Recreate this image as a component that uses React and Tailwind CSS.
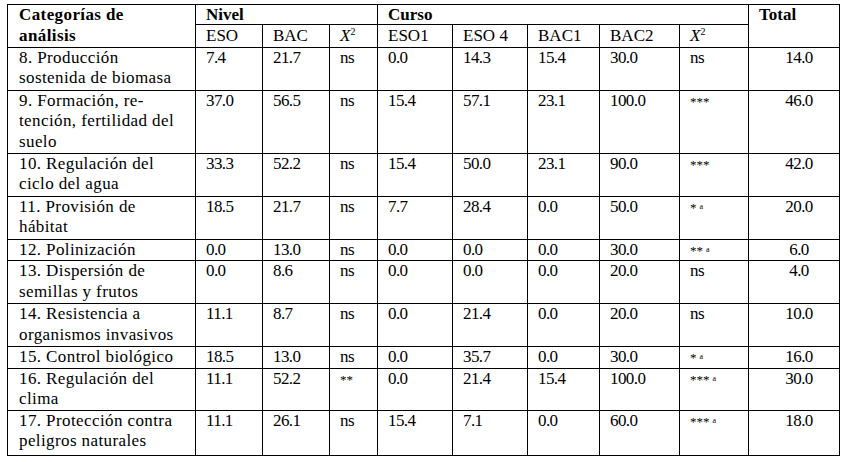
import React from "react";

const rows = [
  { h: "h-[43px]", label: ["8. Producción", "sostenida de biomasa"], v: ["7.4", "21.7", "ns", "0.0", "14.3", "15.4", "30.0", "ns"], total: "14.0" },
  { h: "h-[63px]", label: ["9. Formación, re-", "tención, fertilidad del", "suelo"], v: ["37.0", "56.5", "ns", "15.4", "57.1", "23.1", "100.0", "***"], total: "46.0" },
  { h: "h-[43px]", label: ["10. Regulación del", "ciclo del agua"], v: ["33.3", "52.2", "ns", "15.4", "50.0", "23.1", "90.0", "***"], total: "42.0" },
  { h: "h-[43px]", label: ["11. Provisión de", "hábitat"], v: ["18.5", "21.7", "ns", "7.7", "28.4", "0.0", "50.0", "* a"], total: "20.0" },
  { h: "h-[21px]", label: ["12. Polinización"], v: ["0.0", "13.0", "ns", "0.0", "0.0", "0.0", "30.0", "** a"], total: "6.0" },
  { h: "h-[43px]", label: ["13. Dispersión de", "semillas y frutos"], v: ["0.0", "8.6", "ns", "0.0", "0.0", "0.0", "20.0", "ns"], total: "4.0" },
  { h: "h-[43px]", label: ["14. Resistencia a", "organismos invasivos"], v: ["11.1", "8.7", "ns", "0.0", "21.4", "0.0", "20.0", "ns"], total: "10.0" },
  { h: "h-[21px]", label: ["15. Control biológico"], v: ["18.5", "13.0", "ns", "0.0", "35.7", "0.0", "30.0", "* a"], total: "16.0" },
  { h: "h-[41px]", label: ["16. Regulación del", "clima"], v: ["11.1", "52.2", "**", "0.0", "21.4", "15.4", "100.0", "*** a"], total: "30.0" },
  { h: "h-[45px]", label: ["17. Protección contra", "peligros naturales"], v: ["11.1", "26.1", "ns", "15.4", "7.1", "0.0", "60.0", "*** a"], total: "18.0" },
];

const cell = "border border-black align-top pl-[10px] leading-[20.5px]";

function Value({ text }) {
  if (text.startsWith("*")) {
    const [stars, sup] = text.split(" ");
    return (
      <span>
        <span className="text-[13px] leading-none">{stars}</span>
        {sup && <span className="ml-[3px] text-[8px] leading-none align-[3px]">{sup}</span>}
      </span>
    );
  }
  return <span className="tracking-[-0.6px]">{text}</span>;
}

function Chi() {
  return (
    <span className="font-normal">
      <span className="italic">X</span>
      <span className="text-[10px] leading-none align-[6px]">2</span>
    </span>
  );
}

export default function App() {
  return (
    <div className="min-h-[462px] w-[847px] bg-white pl-[7px] pt-[4px] text-black font-['Liberation_Serif','Times_New_Roman',serif]">
      <table className="w-[832px] table-fixed border-collapse text-[17px] font-['Liberation_Serif','Times_New_Roman',serif]">
        <colgroup>
          <col className="w-[188px]" />
          <col className="w-[67px]" />
          <col className="w-[67px]" />
          <col className="w-[48px]" />
          <col className="w-[75px]" />
          <col className="w-[75px]" />
          <col className="w-[72px]" />
          <col className="w-[80px]" />
          <col className="w-[69px]" />
          <col className="w-[91px]" />
        </colgroup>
        <thead>
          <tr>
            <th rowSpan={2} className={`${cell} pl-[11px] text-left font-bold tracking-[0.4px]`}>
              Categorías de
              <br />
              análisis
            </th>
            <th colSpan={3} className="h-[19px] border border-black pl-[10px] text-left align-top font-bold leading-[19px]">
              Nivel
            </th>
            <th colSpan={5} className="h-[19px] border border-black pl-[10px] text-left align-top font-bold leading-[19px]">
              Curso
            </th>
            <th rowSpan={2} className={`${cell} text-left font-bold`}>
              Total
            </th>
          </tr>
          <tr>
            {["ESO", "BAC", "chi", "ESO1", "ESO 4", "BAC1", "BAC2", "chi"].map((h, i) => (
              <th key={i} className="border border-black pl-[10px] text-left align-top font-normal leading-[21.5px]">
                {h === "chi" ? <Chi /> : h}
              </th>
            ))}
          </tr>
        </thead>
        <tbody>
          {rows.map((r) => (
            <tr key={r.label[0]} className={r.h}>
              <td className={`${cell} pl-[11px] tracking-[0.4px]`}>
                {r.label.map((l, i) => (
                  <div key={i}>{l}</div>
                ))}
              </td>
              {r.v.map((v, i) => (
                <td key={i} className={cell}>
                  <Value text={v} />
                </td>
              ))}
              <td className={`${cell} pl-[2px] text-center`}>
                <span className="tracking-[-0.6px]">{r.total}</span>
              </td>
            </tr>
          ))}
        </tbody>
      </table>
    </div>
  );
}
